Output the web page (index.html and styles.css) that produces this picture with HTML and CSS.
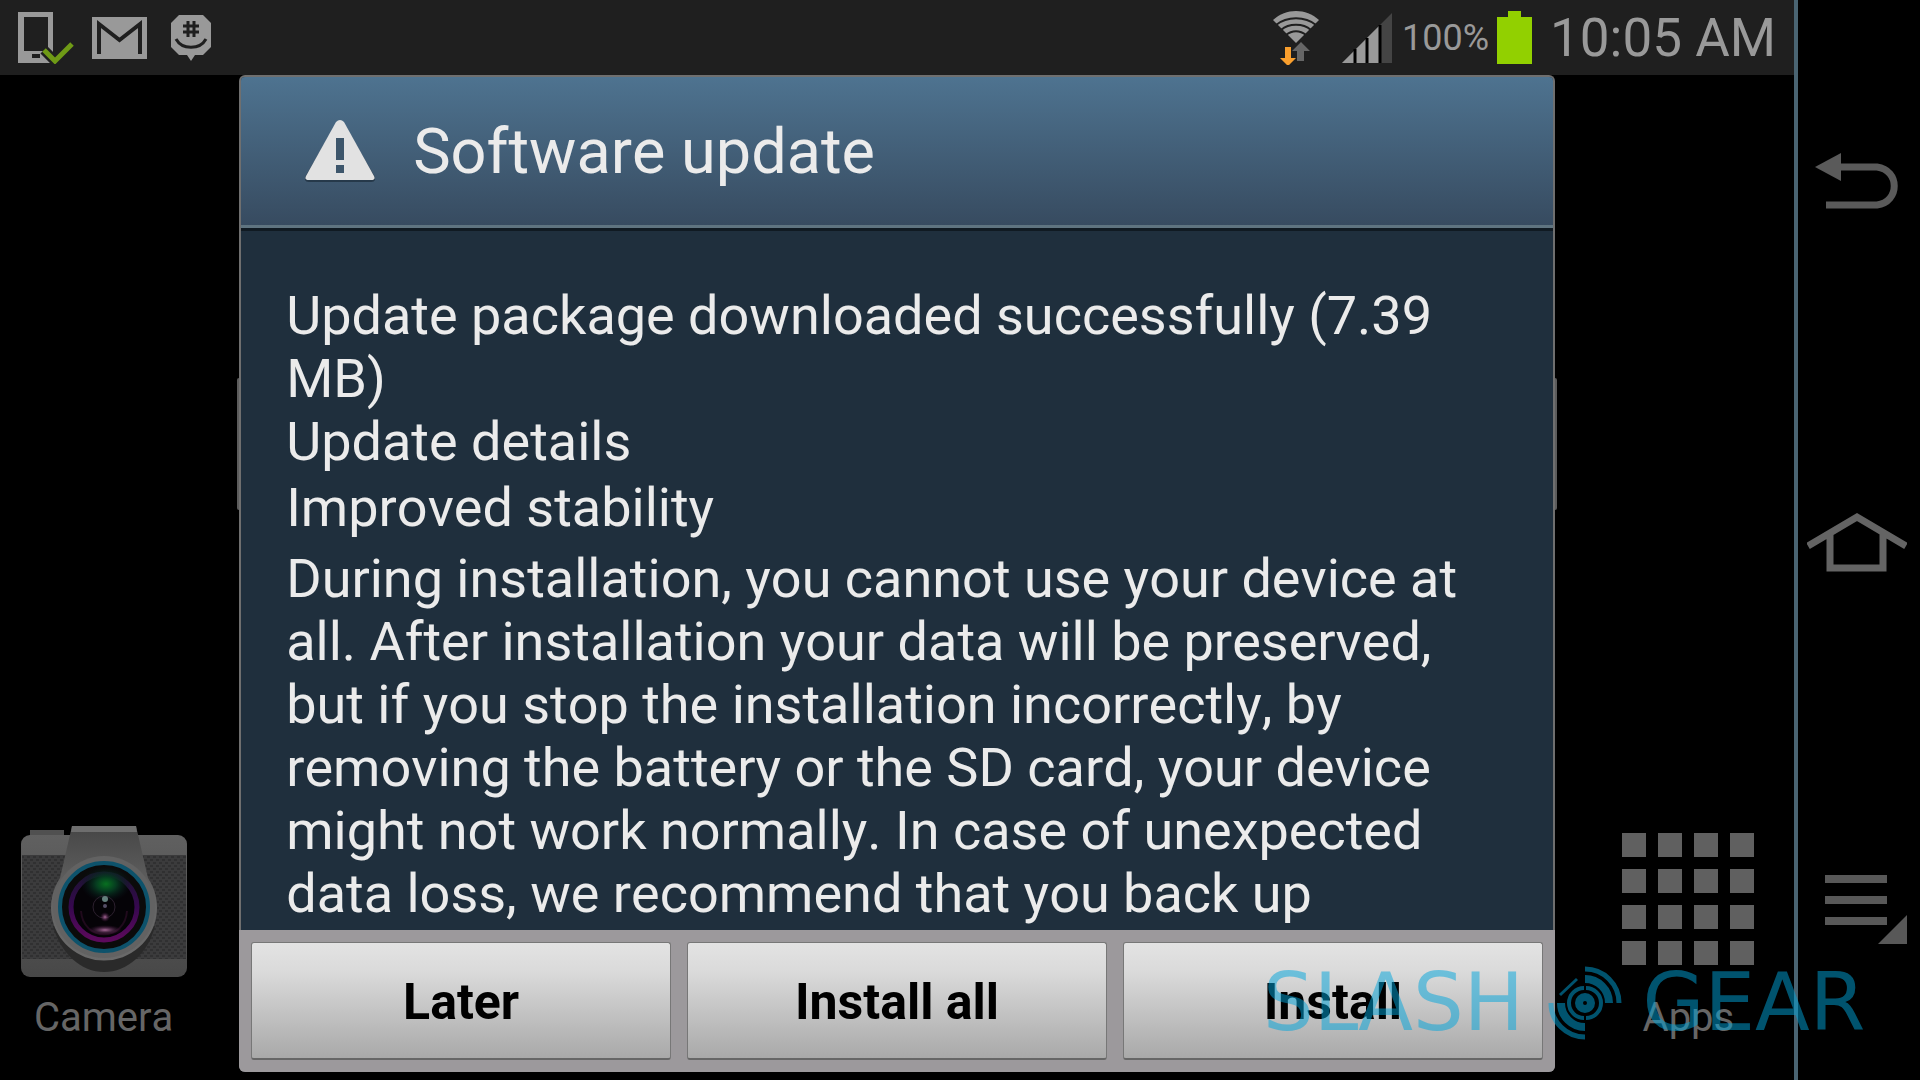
FILE: index.html
```html
<!DOCTYPE html>
<html lang="en">
<head>
    <meta charset="UTF-8">
    <meta name="viewport" content="width=device-width, initial-scale=1.0">
    <title>Software update</title>
    <link rel="stylesheet" href="styles.css">
</head>
<body>
    <div class="screen">
        <header class="status-bar">
            <div class="notifications">
                <svg width="56" height="52" viewBox="0 0 56 52">
                    <path fill="#999" fill-rule="evenodd" d="M0 0h35v51H0zM6 5v34h24V5zM14 42v4h8v-4z"/>
                    <path fill="none" stroke="#1f1f1f" stroke-width="10" d="M26 38l11 11 17-17"/>
                    <path fill="none" stroke="#6f9a16" stroke-width="5" d="M26 38l11 11 17-17"/>
                </svg>
                <svg width="55" height="42" viewBox="0 0 55 42">
                    <path fill="#999" d="M0 0h55v42H0z"/>
                    <path fill="none" stroke="#1f1f1f" stroke-width="4" d="M7 37V7l20.500 16L48 7v30"/>
                </svg>
                <svg class="chat" width="40" height="46" viewBox="0 0 40 46">
                    <path fill="#999" d="M8 0h24l8 8v24l-8 8h-8l-4 6-4-6H8l-8-8V8z"/>
                    <path fill="none" stroke="#1f1f1f" stroke-width="3" d="M17 6v16M23 6v16M12 11h16M12 17h16M5 24c6 11 24 11 30 0"/>
                </svg>
            </div>
            <div class="indicators">
                <svg width="48" height="54" viewBox="0 0 48 54">
                    <path fill="#999" d="M24 32L1 9C14-3 34-3 47 9z"/>
                    <path fill="none" stroke="#1f1f1f" stroke-width="2" d="M4 14c11-9 29-9 40 0M9 19c8-7 22-7 30 0M14 24c6-5 14-5 20 0"/>
                    <path fill="#666" d="M29 31l9 9h-6v10h-7V40h-5z"/>
                    <path fill="#fa9f2d" d="M13 36h6v11h5l-8 8-8-8h5z"/>
                </svg>
                <svg class="signal" width="50" height="50" viewBox="0 0 50 50">
                    <path fill="#444" d="M50 0v50H0z"/>
                    <path fill="#999" d="M37 13v37H0z"/>
                    <path stroke="#000" stroke-width="3" d="M13 36v14M25 25v25M38 12v38"/>
                </svg>
                <span class="percent">100%</span>
                <svg class="battery" width="35" height="53" viewBox="0 0 35 53">
                    <path fill="#92d000" d="M11 0h13v6h11v47H0V6h11z"/>
                </svg>
                <time class="clock">10:05 AM</time>
            </div>
        </header>

        <main class="home">
            <a class="shortcut camera" href="#">
                <svg width="166" height="151" viewBox="0 0 166 151">
                    <defs>
                        <linearGradient id="shell" x1="0" y1="0" x2="0" y2="1">
                            <stop offset="0" stop-color="#606060"/>
                            <stop offset="1" stop-color="#484848"/>
                        </linearGradient>
                        <linearGradient id="rim" x1="0" y1="0" x2="0" y2="1">
                            <stop offset="0" stop-color="#464646"/>
                            <stop offset="0.500" stop-color="#636363"/>
                            <stop offset="1" stop-color="#6a6a6a"/>
                        </linearGradient>
                        <linearGradient id="ring" x1="0" y1="0" x2="0" y2="1">
                            <stop offset="0" stop-color="#1c1430"/>
                            <stop offset="0.500" stop-color="#36084f"/>
                            <stop offset="1" stop-color="#5c0a5c"/>
                        </linearGradient>
                        <radialGradient id="green">
                            <stop offset="0" stop-color="#087020"/>
                            <stop offset="0.400" stop-color="#063c20"/>
                            <stop offset="1" stop-color="#08141c" stop-opacity="0"/>
                        </radialGradient>
                        <radialGradient id="pink">
                            <stop offset="0" stop-color="#a86a98"/>
                            <stop offset="1" stop-color="#40103c" stop-opacity="0"/>
                        </radialGradient>
                        <pattern id="grip" width="6" height="6" patternUnits="userSpaceOnUse">
                            <path fill="#3b3b3c" d="M0 0h6v6H0z"/>
                            <path fill="#303031" d="M0 0h3v2H0zM3 3h3v2H3z"/>
                        </pattern>
                    </defs>
                    <path fill="#505050" d="M9 4h34v8H9z"/>
                    <rect y="9" width="166" height="142" rx="9" fill="url(#shell)"/>
                    <path fill="url(#grip)" d="M1 29h164v104H1z"/>
                    <path fill="#2a2a2a" d="M32 100c8 28 28 46 51 46s44-18 51-46z"/>
                    <path fill="url(#rim)" d="M51 0h64l12 52a53 53 0 1 1-88 0z"/>
                    <path fill="#6e6e6e" d="M51 0h64l1 6H50z"/>
                    <circle cx="83" cy="81" r="51" fill="#626262"/>
                    <circle cx="83" cy="81" r="44" fill="#0b0b0b" stroke="#0d526b" stroke-width="4"/>
                    <circle cx="83" cy="81" r="33" fill="#050307" stroke="url(#ring)" stroke-width="5"/>
                    <ellipse cx="85" cy="58" rx="25" ry="18" fill="url(#green)"/>
                    <circle cx="83" cy="81" r="11" fill="none" stroke="#2c202e"/>
                    <path fill="none" stroke="#200a1c" stroke-width="2" d="M60 85c2 31 44 31 46 0"/>
                    <ellipse cx="84" cy="104" rx="17" ry="5" fill="url(#pink)"/>
                    <circle cx="84" cy="91" r="5" fill="url(#pink)"/>
                    <circle cx="84" cy="73" r="3" fill="#637f7c"/>
                    <circle cx="84" cy="80" r="2" fill="#554e66"/>
                </svg>
                <span>Camera</span>
            </a>

            <section class="dialog" role="dialog" aria-labelledby="dialog-title">
                <div class="dialog-header">
                    <svg width="70" height="62" viewBox="0 0 70 62">
                        <path fill="#26394a" d="M31 4q4-5 8 0l31 53q1 5-4 5H4q-5 0-4-5z"/>
                        <path fill="#e2e2e2" d="M31 2q4-4 8 0l30 54q2 4-3 4H4q-5 0-3-4z"/>
                        <path fill="#3d566b" d="M31 18h8v22h-8zM31 45h8v8h-8z"/>
                    </svg>
                    <h1 id="dialog-title">Software update</h1>
                </div>
                <div class="dialog-body">
                    <p>Update package downloaded successfully (7.39 MB)<br>Update details</p>
                    <p class="detail">Improved stability</p>
                    <p class="notice">During installation, you cannot use your device at all. After installation your data will be preserved, but if you stop the installation incorrectly, by removing the battery or the SD card, your device might not work normally. In case of unexpected data loss, we recommend that you back up</p>
                </div>
                <div class="dialog-actions">
                    <button type="button">Later</button>
                    <button type="button">Install all</button>
                    <button type="button">Install</button>
                </div>
            </section>

            <a class="shortcut apps" href="#">
                <span class="grid-icon">
                    <i></i><i></i><i></i><i></i>
                    <i></i><i></i><i></i><i></i>
                    <i></i><i></i><i></i><i></i>
                    <i></i><i></i><i></i><i></i>
                </span>
                <span>Apps</span>
            </a>
        </main>
    </div>

    <nav class="nav-keys">
        <button type="button" aria-label="Back">
            <svg width="84" height="56" viewBox="0 0 84 56">
                <path fill="#5a5a5a" d="M0 14L26 0v28z"/>
                <path fill="none" stroke="#5a5a5a" stroke-width="7" d="M24 14h38c23 3 23 35 0 38H11"/>
            </svg>
        </button>
        <button type="button" aria-label="Home">
            <svg width="100" height="60" viewBox="0 0 100 60">
                <path fill="none" stroke="#646464" stroke-width="7" d="M1 34L50 5l49 29M23 22v34h53V22"/>
            </svg>
        </button>
        <button type="button" class="menu-key" aria-label="Menu">
            <svg width="83" height="69" viewBox="0 0 83 69">
                <path fill="#585858" d="M0 0h62v8H0zM0 21h62v8H0zM0 42h62v8H0zM82 40v29H53z"/>
            </svg>
        </button>
    </nav>

    <div class="watermark">
        <span>SLASH</span>
        <svg width="74" height="74" viewBox="-37 -37 74 74">
            <g fill="none" stroke="#00a6dc">
                <path stroke-width="5" d="M0-34A34 34 0 0 1 34 0M0 34A34 34 0 0 1-34 0"/>
                <path stroke-width="8" d="M0-24A24 24 0 0 1 24 0M0 24A24 24 0 0 1-24 0"/>
                <path stroke-width="4" d="M1-15A15 15 0 0 1 1 15M-1-15A15 15 0 0 0-1 15"/>
                <circle r="6" stroke-width="8"/>
                <path stroke-width="3" d="M-25-8L-8-24"/>
            </g>
        </svg>
        <span>GEAR</span>
    </div>
</body>
</html>
```
FILE: styles.css
```css
* {
    box-sizing: border-box;
}

body {
    display: flex;
    position: relative;
    height: 100vh;
    margin: 0;
    background-color: #000;
    font-family: Roboto, 'Liberation Sans', sans-serif;
    font-kerning: none;
    overflow: hidden;
}

button {
    border: 0;
    padding: 0;
    background: none;
    font-family: inherit;
    cursor: pointer;
}

svg {
    display: block;
    flex-shrink: 0;
}

.screen {
    flex: 1;
    display: flex;
    flex-direction: column;
    min-width: 0;
}

/* status bar */
.status-bar {
    display: flex;
    justify-content: space-between;
    align-items: center;
    height: 75px;
    padding: 0 18px;
    background-color: #1f1f1f;
    color: #999;
}

.notifications,
.indicators {
    display: flex;
    align-items: center;
}

.notifications {
    gap: 18px;
}

.chat {
    margin-left: 6px;
}

.percent {
    margin-left: 10px;
    font-size: 36px;
}

.signal {
    margin-left: 22px;
}

.battery {
    margin: 0 18px 0 8px;
}

.clock {
    font-size: 53px;
}

/* home screen */
.home {
    flex: 1;
    display: grid;
    grid-template-columns: 2fr 11fr 2fr;
    min-height: 0;
    padding-bottom: 8px;
}

.shortcut {
    display: flex;
    flex-direction: column;
    align-items: center;
    align-self: end;
    gap: 18px;
    padding-bottom: 31px;
    color: #666;
    font-size: 40px;
    line-height: 46px;
    text-decoration: none;
}

.camera {
    padding-right: 32px;
}

.apps {
    gap: 30px;
    padding-left: 28px;
}

.grid-icon {
    display: grid;
    grid-template-columns: repeat(4, 24px);
    gap: 12px;
}

.grid-icon i {
    height: 24px;
    background-color: #606060;
}

/* dialog */
.dialog {
    position: relative;
    display: flex;
    flex-direction: column;
    min-height: 0;
    border: 2px solid #6f6f6f;
    border-bottom: 0;
    border-radius: 6px;
    background-color: #1f2f3d;
}

/* edge of the widget behind the dialog */
.dialog::before {
    content: '';
    position: absolute;
    top: 301px;
    left: -4px;
    right: -4px;
    height: 132px;
    border: solid #5c5c5c;
    border-width: 0 2px;
    border-radius: 2px;
}

.dialog-header {
    display: flex;
    align-items: center;
    gap: 38px;
    height: 151px;
    padding: 0 64px;
    border-bottom: 3px solid #5f7480;
    border-radius: 4px 4px 0 0;
    background: linear-gradient(#4e7390, #374b60);
}

.dialog-header h1 {
    margin: 0;
    color: #ebebeb;
    font-size: 63px;
    font-weight: 400;
}

.dialog-body {
    flex: 1;
    min-height: 0;
    padding: 53px 45px 0;
    border-top: 3px solid #101a22;
    color: #ebebeb;
    font-size: 54px;
    line-height: 63px;
    overflow: hidden;
}

.dialog-body p {
    margin: 0;
}

.dialog-body .detail {
    margin-top: 3px;
}

.dialog-body .notice {
    margin-top: 8px;
}

.dialog-actions {
    display: flex;
    gap: 16px;
    height: 142px;
    margin: 0 -2px;
    padding: 12px;
    border-radius: 0 0 6px 6px;
    background-color: #9c999c;
}

.dialog-actions button {
    flex: 1;
    padding-top: 3px;
    border: 1px solid #777;
    border-bottom: 2px solid #666;
    border-radius: 3px;
    background: linear-gradient(#e3e3e3, #dadada 25%, #a9a9a9);
    color: #000;
    font-size: 50px;
    font-weight: 700;
}

/* hardware keys */
.nav-keys {
    display: flex;
    flex-direction: column;
    justify-content: space-between;
    align-items: center;
    width: 126px;
    padding: 153px 4px 136px 0;
    border-left: 4px solid #4a6472;
}

.menu-key {
    align-self: flex-end;
    padding-right: 8px;
}

/* watermark over everything */
.watermark {
    position: absolute;
    right: 45px;
    bottom: 40px;
    display: grid;
    grid-template-columns: 287px 74px 242px;
    gap: 11px;
    color: #00a6dc;
    font-family: 'DejaVu Sans', sans-serif;
    font-size: 80px;
    line-height: 74px;
    text-align: center;
    opacity: 0.5;
    pointer-events: none;
}
```
